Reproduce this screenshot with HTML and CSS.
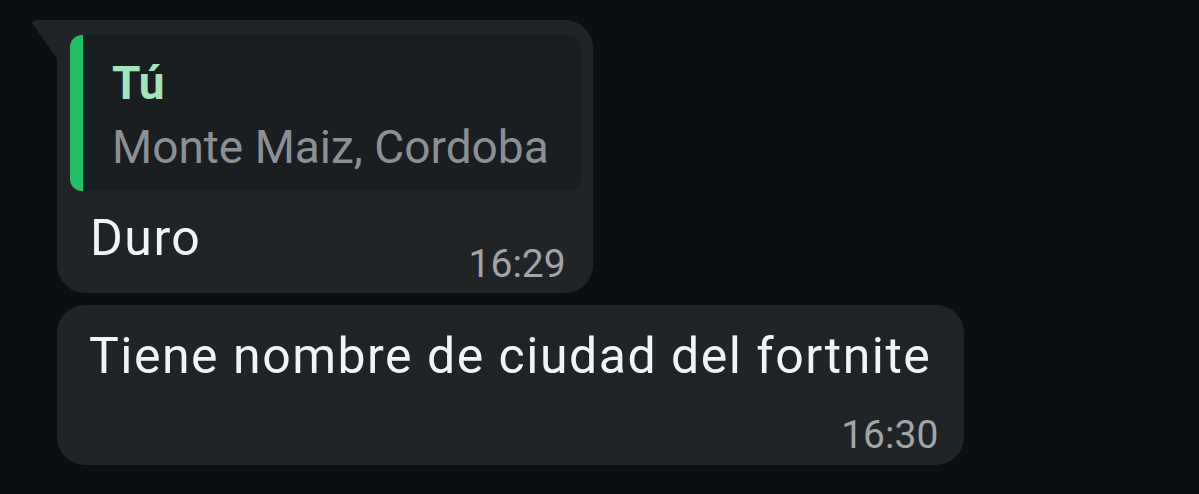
FILE: index.html
```html
<!DOCTYPE html>
<html lang="es">
<head>
    <meta charset="UTF-8">
    <meta name="viewport" content="width=device-width, initial-scale=1.0">
    <title>Chat</title>
    <link rel="stylesheet" href="styles.css">
</head>
<body>
    <div class="chat">
        <div class="bubble bubble-tail">
            <div class="quote">
                <div class="quote-author">Tú</div>
                <div class="quote-text">Monte Maiz, Cordoba</div>
            </div>
            <div class="msg-row">
                <span class="msg-text msg-short">Duro</span>
                <span class="time">16:29</span>
            </div>
        </div>

        <div class="bubble bubble-long">
            <div class="msg-text">Tiene nombre de ciudad del fortnite</div>
            <div class="time time-right">16:30</div>
        </div>
    </div>
</body>
</html>
```

FILE: styles.css
```css
body {
    margin: 0;
    height: 100vh;
    background-color: #0c0f12;
    font-family: Roboto, "Noto Sans", sans-serif;
    overflow: hidden;
}

.chat {
    display: flex;
    flex-direction: column;
    align-items: flex-start;
    gap: 12px;
    padding: 20px 0 0 57px;
}

.bubble {
    position: relative;
    background-color: #202427;
    border-radius: 28px;
}

/* little tail on the first message of a group */
.bubble-tail {
    border-top-left-radius: 0;
    padding: 15px 12px 9px 13px;
}

.bubble-tail::before {
    content: "";
    position: absolute;
    left: -25px;
    top: 0;
    width: 26px;
    height: 40px;
    background-color: #202427;
    clip-path: polygon(0 3px, 3px 0, 100% 0, 100% 100%);
}

.quote {
    background-color: #1a1e21;
    border-left: 13px solid #22c064;
    border-radius: 12px;
    padding: 16px 32px 12px 29px;
}

.quote-author {
    font-size: 46px;
    line-height: 64px;
    font-weight: 700;
    color: #a3e4b8;
}

.quote-text {
    font-size: 46px;
    line-height: 64px;
    color: #8b9094;
}

.msg-row {
    display: flex;
    justify-content: space-between;
    align-items: flex-end;
    margin-top: 17px;
}

.msg-text {
    font-size: 50px;
    line-height: 60px;
    letter-spacing: 1.5px;
    color: #f1f3f4;
}

.msg-short {
    margin-left: 20px;
    margin-bottom: 16px;
}

.time {
    font-size: 39px;
    line-height: 40px;
    color: #a0a5a9;
}

.msg-row .time {
    margin-right: 15px;
}

.bubble-long {
    padding: 21px 26px 10px 32px;
}

.bubble-long .msg-text {
    margin-right: 7px;
}

.time-right {
    text-align: right;
    margin-top: 29px;
}
```
